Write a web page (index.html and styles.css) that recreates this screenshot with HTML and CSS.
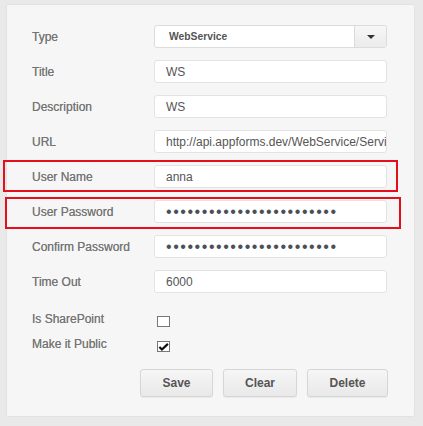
FILE: index.html
```html
<!DOCTYPE html>
<html>
<head>
<meta charset="utf-8">
<link rel="stylesheet" href="styles.css">
</head>
<body>
<div class="panel">
  <div class="form">
    <label class="lbl">Type</label>
    <div class="select"><span class="select-text">WebService</span><span class="select-btn"><span class="caret"></span></span></div>

    <label class="lbl">Title</label>
    <input class="field" type="text" value="WS">

    <label class="lbl">Description</label>
    <input class="field" type="text" value="WS">

    <label class="lbl">URL</label>
    <input class="field" type="text" value="http://api.appforms.dev/WebService/Service.asmx">

    <label class="lbl">User Name</label>
    <input class="field" type="text" value="anna">

    <label class="lbl">User Password</label>
    <input class="field pw" type="password" value="aaaaaaaaaaaaaaaaaaaaaaaa">

    <label class="lbl">Confirm Password</label>
    <input class="field pw" type="password" value="aaaaaaaaaaaaaaaaaaaaaaaa">

    <label class="lbl">Time Out</label>
    <input class="field" type="text" value="6000">
  </div>

  <div class="checks">
    <label class="lbl clbl">Is SharePoint</label>
    <span class="cbox"></span>
    <label class="lbl clbl">Make it Public</label>
    <span class="cbox"><svg width="12" height="10" viewBox="0 0 12 10"><path d="M1.5 5 L4.3 7.8 L10.8 1.6" fill="none" stroke="#0d0d14" stroke-width="2.4"/></svg></span>
  </div>

  <div class="buttons">
    <button class="btn btn-save">Save</button>
    <button class="btn btn-clear">Clear</button>
    <button class="btn btn-delete">Delete</button>
  </div>

  <div class="mark mark-user"></div>
  <div class="mark mark-pass"></div>
</div>
</body>
</html>
```

FILE: styles.css
```css
html, body {
  margin: 0;
  padding: 0;
}
body {
  background: #e9e9e9;
  font-family: "Liberation Sans", Arial, sans-serif;
  font-size: 12px;
  width: 423px;
  height: 426px;
  overflow: hidden;
}
.panel {
  position: relative;
  box-sizing: border-box;
  margin: 4px 0 0 6px;
  width: 409px;
  height: 413px;
  background: #f6f6f6;
  border: 1px solid #e2e2e2;
  border-radius: 2px;
  padding: 20px 0 0 25px;
}
.form {
  display: grid;
  grid-template-columns: 122px 233px;
  grid-auto-rows: 35px;
  align-items: start;
}
.lbl {
  color: #747474;
  font-size: 12px;
  line-height: 23px;
  padding-top: 1px;
  text-shadow: 0 0 0.4px #8a8a8a;
}
.field {
  box-sizing: border-box;
  width: 233px;
  height: 23px;
  margin: 0;
  border: 1px solid #e3e3e3;
  border-radius: 3px;
  background: #fff;
  padding: 0 0 0 11px;
  font-family: "Liberation Sans", Arial, sans-serif;
  font-size: 12px;
  color: #555;
  outline: none;
}
.pw {
  font-size: 16px;
  letter-spacing: 1.55px;
  color: #4a4f5a;
}
.select {
  box-sizing: border-box;
  width: 233px;
  height: 23px;
  border: 1px solid #dcdcdc;
  border-radius: 3px;
  background: #fff;
  display: flex;
  align-items: stretch;
}
.select-text {
  flex: 1;
  padding-left: 14px;
  line-height: 21px;
  font-weight: bold;
  font-size: 10.3px;
  color: #555;
}
.select-btn {
  width: 31px;
  border-left: 1px solid #dadada;
  background: linear-gradient(#f7f7f7, #ebebeb);
  border-radius: 0 3px 3px 0;
  display: flex;
  align-items: center;
  justify-content: center;
}
.caret {
  width: 0;
  height: 0;
  border-left: 4.5px solid transparent;
  border-right: 4.5px solid transparent;
  border-top: 4.5px solid #333;
}
.checks {
  display: grid;
  grid-template-columns: 125px 20px;
  grid-auto-rows: 25px;
  margin-top: 5px;
}
.clbl {
  line-height: 14px;
  padding-top: 2px;
}
.cbox {
  box-sizing: border-box;
  width: 13px;
  height: 11px;
  margin-top: 6px;
  border: 1px solid #777;
  background: #fff;
  display: flex;
  align-items: center;
  justify-content: center;
}
.cbox svg {
  display: block;
}
.buttons {
  display: flex;
  justify-content: flex-end;
  gap: 10px;
  width: 356px;
  margin-top: 9px;
}
.btn {
  box-sizing: border-box;
  height: 28px;
  border: 1px solid #d6d6d6;
  border-radius: 3px;
  background: linear-gradient(#f6f6f6, #e9e9e9);
  box-shadow: 0 1px 1px rgba(0,0,0,0.06);
  font-family: "Liberation Sans", Arial, sans-serif;
  font-weight: bold;
  font-size: 12px;
  color: #555;
  padding: 0;
}
.btn-save { width: 73px; }
.btn-clear { width: 74px; }
.btn-delete { width: 81px; }
.mark {
  position: absolute;
  box-sizing: border-box;
  border: 2px solid #e3101c;
}
.mark-user {
  left: -4px;
  top: 155px;
  width: 395px;
  height: 32px;
}
.mark-pass {
  left: -2px;
  top: 192px;
  width: 396px;
  height: 32px;
}
```
